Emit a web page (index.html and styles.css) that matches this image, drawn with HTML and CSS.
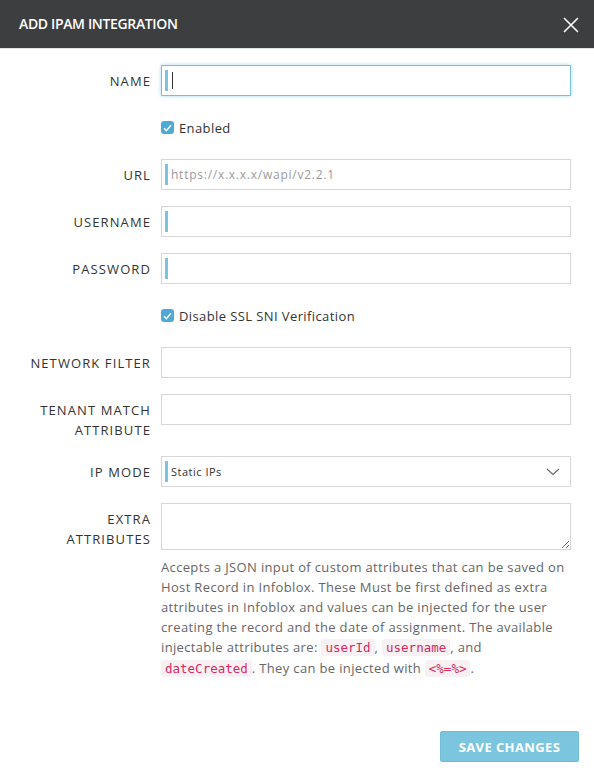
FILE: index.html
```html
<!DOCTYPE html>
<html>
<head>
<meta charset="utf-8">
<link rel="stylesheet" href="styles.css">
</head>
<body>
<div class="modal">
  <div class="modal-header">
    <h1 class="title">ADD IPAM INTEGRATION</h1>
    <svg class="close" width="16" height="16" viewBox="0 0 16 16"><path d="M1 1 L15 15 M15 1 L1 15" stroke="#fff" stroke-width="1.6" fill="none"/></svg>
  </div>
  <div class="modal-body">
    <div class="row">
      <label class="label">NAME</label>
      <div class="input focus"><span class="bar"></span><span class="caret"></span></div>
    </div>
    <div class="row">
      <span class="label"></span>
      <div class="check"><span class="box"><svg width="9" height="8" viewBox="0 0 9 8"><path d="M1 4.2 L3.4 6.6 L8 1.2" stroke="#fff" stroke-width="1.4" fill="none"/></svg></span><span>Enabled</span></div>
    </div>
    <div class="row">
      <label class="label">URL</label>
      <div class="input"><span class="bar"></span><span class="placeholder">https://x.x.x.x/wapi/v2.2.1</span></div>
    </div>
    <div class="row">
      <label class="label">USERNAME</label>
      <div class="input"><span class="bar"></span></div>
    </div>
    <div class="row">
      <label class="label">PASSWORD</label>
      <div class="input"><span class="bar"></span></div>
    </div>
    <div class="row">
      <span class="label"></span>
      <div class="check"><span class="box"><svg width="9" height="8" viewBox="0 0 9 8"><path d="M1 4.2 L3.4 6.6 L8 1.2" stroke="#fff" stroke-width="1.4" fill="none"/></svg></span><span>Disable SSL SNI Verification</span></div>
    </div>
    <div class="row">
      <label class="label">NETWORK FILTER</label>
      <div class="input plain"></div>
    </div>
    <div class="row">
      <label class="label">TENANT MATCH<br>ATTRIBUTE</label>
      <div class="input plain"></div>
    </div>
    <div class="row">
      <label class="label">IP MODE</label>
      <div class="input select"><span class="bar"></span><span class="value">Static IPs</span>
        <svg class="chev" width="14" height="8" viewBox="0 0 14 8"><path d="M1 1 L7 6.5 L13 1" stroke="#666" stroke-width="1.1" fill="none"/></svg>
      </div>
    </div>
    <div class="row">
      <label class="label">EXTRA<br>ATTRIBUTES</label>
      <div class="field">
        <textarea class="textarea"></textarea>
        <p class="help">Accepts a JSON input of custom attributes that can be saved on Host Record in Infoblox. These Must be first defined as extra attributes in Infoblox and values can be injected for the user creating the record and the date of assignment. The available injectable attributes are: <code>userId</code>, <code>username</code>, and <code>dateCreated</code>. They can be injected with <code>&lt;%=%&gt;</code>.</p>
      </div>
    </div>
  </div>
  <div class="modal-footer">
    <button class="btn">SAVE CHANGES</button>
  </div>
</div>
</body>
</html>
```

FILE: styles.css
```css
* { box-sizing: border-box; }
html, body { margin: 0; padding: 0; background: #fff; }
body { font-family: "Open Sans", "Noto Sans", sans-serif; color: #333; font-size: 13px; }
.modal { width: 594px; height: 777px; display: flex; flex-direction: column; }
.modal-header {
  height: 49px; background: #3d3e40; border-bottom: 1px solid #e3e5e6;
  display: flex; align-items: center; justify-content: space-between;
  padding: 0 15px 0 19px;
}
.title { margin: 0; color: #fff; font-size: 14px; font-weight: 600; letter-spacing: -0.35px; padding-bottom: 1px; }
.close { display: block; margin-top: 1px; }
.modal-body { padding: 16px 23px 0 0; display: flex; flex-direction: column; gap: 16px; }
.row { display: grid; grid-template-columns: 150px 410px; column-gap: 11px; align-items: start; }
.label { text-align: right; line-height: 20px; padding-top: 6px; font-size: 13px; color: #333; letter-spacing: 1.1px; margin-right: -1px; }
.input {
  height: 31px; border: 1px solid #d6d6d6; background: #fff;
  display: flex; align-items: center; padding: 4px 3px;
}
.input.focus { border-color: #74c0de; box-shadow: 0 0 4px rgba(116, 192, 222, 0.6); }
.bar { width: 3px; align-self: stretch; background: #7cc3de; flex: none; }
.caret { width: 1px; height: 17px; background: #333; margin-left: 4px; }
.placeholder { color: #9a9a9a; font-size: 12px; letter-spacing: 0.75px; margin-left: 3px; }
.select .value { font-size: 11px; letter-spacing: 0.5px; color: #333; margin-left: 3px; flex: 1; }
.chev { margin-right: 7px; }
.check { height: 31px; display: flex; align-items: center; gap: 5px; font-size: 13px; color: #333; letter-spacing: 0.4px; }
.box {
  width: 13px; height: 13px; border-radius: 3px; background: #4fa9d6;
  display: flex; align-items: center; justify-content: center;
}
.box svg { display: block; }
.field { display: flex; flex-direction: column; }
.textarea {
  display: block; width: 410px; height: 47px; border: 1px solid #d6d6d6;
  margin: 0; resize: vertical; font-family: inherit;
}
.help { margin: 7px 0 0; line-height: 20px; color: #666; font-size: 13px; letter-spacing: 0.35px; }
code {
  font-family: "DejaVu Sans Mono", monospace; font-size: 12.5px; color: #d9275f; letter-spacing: 0;
  background: #f8f1f3; padding: 1px 4px; border-radius: 3px;
}
.modal-footer { margin-top: auto; display: flex; justify-content: flex-end; padding: 0 15px 15px 0; }
.btn {
  width: 139px; height: 31px; background: #7cc5df; border: 1px solid #6fbcd9; border-radius: 2px;
  color: #fff; font-family: inherit; font-weight: 700; font-size: 13px; letter-spacing: 0.4px; padding: 0;
}
```
